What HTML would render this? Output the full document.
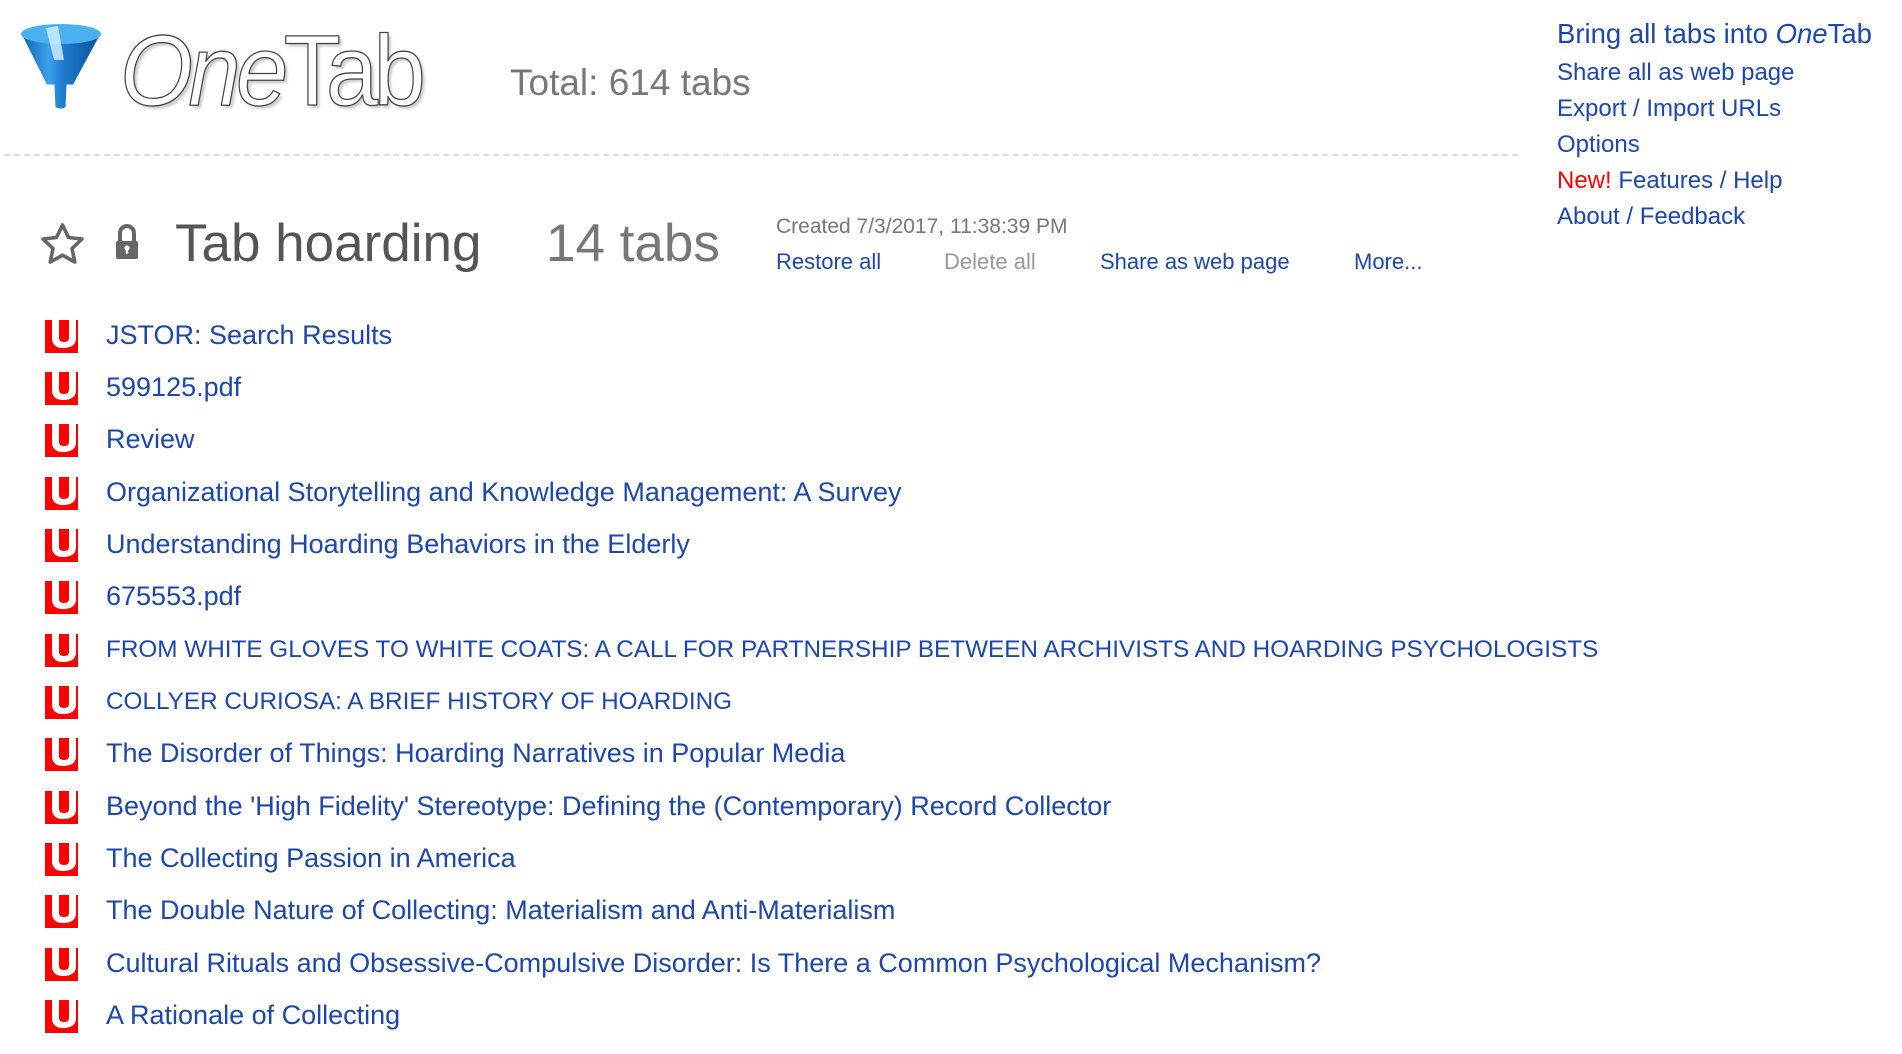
<!DOCTYPE html>
<html><head><meta charset="utf-8"><style>
body{margin:0;width:1902px;height:1054px;background:#fff;position:relative;overflow:hidden;font-family:"Liberation Sans",sans-serif}
.a{position:absolute;white-space:nowrap}
a,.l{color:#1d47a8;text-decoration:none}
.row{position:absolute;left:45px;height:33px}
.row .fi{position:absolute;left:0;top:0}
.row span{position:absolute;left:61px;top:0px;font-size:27px;color:#1d47a8;white-space:nowrap}
.row span.u{font-size:24.3px;top:2px}
</style></head><body>
<svg class="a" style="left:16px;top:20px" width="92" height="94" viewBox="0 0 92 94">
<defs><linearGradient id="g" x1="0" x2="1"><stop offset="0" stop-color="#0a5fb0"/><stop offset=".35" stop-color="#3da0ea"/><stop offset=".5" stop-color="#1f7ed0"/><stop offset="1" stop-color="#0b4f98"/></linearGradient></defs>
<path d="M4 14 Q44 -6 86 14 L58 66 L52 66 L51 88 Q44 92 38 88 L37 66 L30 66 Z" fill="url(#g)" stroke="#fff" stroke-width="3"/>
<ellipse cx="45" cy="14" rx="40" ry="10" fill="#4bb0f0"/>
<path d="M30 8 L42 6 L48 40 L38 40Z" fill="#d8f0ff" opacity=".8"/>
</svg>
<div class="a" style="left:120px;top:14px;font-size:100px;color:#fff;-webkit-text-stroke:1.3px #444;font-style:italic;letter-spacing:-5px;transform:scaleX(.94);transform-origin:left;text-shadow:3px 3px 3px #ccc">One<span style="font-style:normal">Tab</span></div>
<div class="a" style="left:510px;top:62px;font-size:37px;color:#777">Total: 614 tabs</div>
<div class="a" style="left:4px;top:154px;width:1514px;border-top:2px dashed #ddd"></div>
<div class="a" style="left:1557px;top:16px;font-size:27.5px;line-height:36px" >
<div class="l">Bring all tabs into <i>One</i>Tab</div>
</div>
<div class="a" style="left:1557px;top:55px;font-size:24px;line-height:36px">
<div class="l">Share all as web page</div>
<div class="l">Export / Import URLs</div>
<div class="l">Options</div>
<div class="l"><span style="color:#f00">New!</span> Features / Help</div>
<div class="l">About / Feedback</div>
</div>
<svg class="a" style="left:40px;top:222px" width="45" height="43" viewBox="0 0 45 43"><path d="M22.5 3 L28.5 15.5 L42 17 L32 26.5 L34.8 40 L22.5 33.2 L10.2 40 L13 26.5 L3 17 L16.5 15.5 Z" fill="none" stroke="#666" stroke-width="3.6" stroke-linejoin="round"/></svg>
<svg class="a" style="left:114px;top:222px" width="26" height="38" viewBox="0 0 26 38"><path d="M6 20 V11 A7 7 0 0 1 20 11 V20" fill="none" stroke="#666" stroke-width="4"/><rect x="2" y="19" width="22" height="18" rx="2" fill="#666"/><circle cx="13" cy="26" r="2.6" fill="#fff"/><rect x="11.8" y="26" width="2.4" height="6" fill="#fff"/></svg>
<div class="a" style="left:175px;top:213px;font-size:53px;color:#555">Tab hoarding</div>
<div class="a" style="left:546px;top:213px;font-size:53px;color:#777">14 tabs</div>
<div class="a" style="left:776px;top:215px;font-size:21px;color:#777">Created 7/3/2017, 11:38:39 PM</div>
<div class="a l" style="left:776px;top:249px;font-size:22px">Restore all</div>
<div class="a" style="left:944px;top:249px;font-size:22px;color:#999">Delete all</div>
<div class="a l" style="left:1100px;top:249px;font-size:22px">Share as web page</div>
<div class="a l" style="left:1354px;top:249px;font-size:22px">More...</div>

<svg width="0" height="0" style="position:absolute"><defs><g id="f"><rect width="33" height="33" fill="#f00"/><path d="M7 0 V18 Q7 28 18 28 Q31 28 31 18 V0 H24 V18 Q24 22 19 22 Q14 22 14 18 V0Z" fill="#fff"/></g></defs></svg>

<div class="row" style="top:320px"><svg class="fi" width="33" height="33"><use href="#f"/></svg><span>JSTOR: Search Results</span></div>
<div class="row" style="top:372px"><svg class="fi" width="33" height="33"><use href="#f"/></svg><span>599125.pdf</span></div>
<div class="row" style="top:424px"><svg class="fi" width="33" height="33"><use href="#f"/></svg><span>Review</span></div>
<div class="row" style="top:477px"><svg class="fi" width="33" height="33"><use href="#f"/></svg><span>Organizational Storytelling and Knowledge Management: A Survey</span></div>
<div class="row" style="top:529px"><svg class="fi" width="33" height="33"><use href="#f"/></svg><span>Understanding Hoarding Behaviors in the Elderly</span></div>
<div class="row" style="top:581px"><svg class="fi" width="33" height="33"><use href="#f"/></svg><span>675553.pdf</span></div>
<div class="row" style="top:634px"><svg class="fi" width="33" height="33"><use href="#f"/></svg><span class="u">FROM WHITE GLOVES TO WHITE COATS: A CALL FOR PARTNERSHIP BETWEEN ARCHIVISTS AND HOARDING PSYCHOLOGISTS</span></div>
<div class="row" style="top:686px"><svg class="fi" width="33" height="33"><use href="#f"/></svg><span class="u">COLLYER CURIOSA: A BRIEF HISTORY OF HOARDING</span></div>
<div class="row" style="top:738px"><svg class="fi" width="33" height="33"><use href="#f"/></svg><span>The Disorder of Things: Hoarding Narratives in Popular Media</span></div>
<div class="row" style="top:791px"><svg class="fi" width="33" height="33"><use href="#f"/></svg><span>Beyond the 'High Fidelity' Stereotype: Defining the (Contemporary) Record Collector</span></div>
<div class="row" style="top:843px"><svg class="fi" width="33" height="33"><use href="#f"/></svg><span>The Collecting Passion in America</span></div>
<div class="row" style="top:895px"><svg class="fi" width="33" height="33"><use href="#f"/></svg><span>The Double Nature of Collecting: Materialism and Anti-Materialism</span></div>
<div class="row" style="top:948px"><svg class="fi" width="33" height="33"><use href="#f"/></svg><span>Cultural Rituals and Obsessive-Compulsive Disorder: Is There a Common Psychological Mechanism?</span></div>
<div class="row" style="top:1000px"><svg class="fi" width="33" height="33"><use href="#f"/></svg><span>A Rationale of Collecting</span></div>
</body></html>
